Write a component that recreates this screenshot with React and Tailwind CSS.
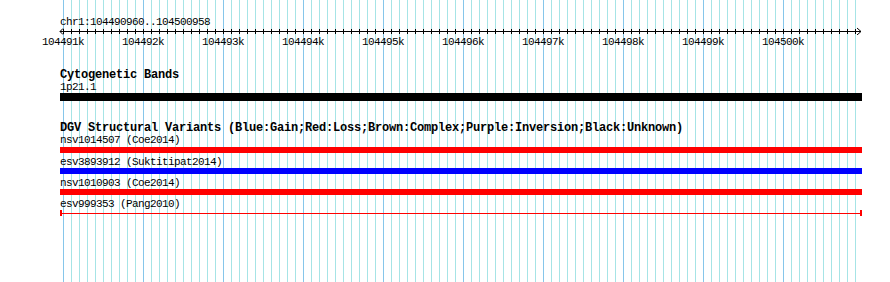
const ticks = Array.from({length: 100}, (_, i) => 63 + i * 8);
const labels = ["104491k", "104492k", "104493k", "104494k", "104495k", "104496k", "104497k", "104498k", "104499k", "104500k"];

const variants = [
    {name: "nsv1014507 (Coe2014)", color: "bg-[#ff0000]"},
    {name: "esv3893912 (Suktitipat2014)", color: "bg-[#0000ff]"},
    {name: "nsv1010903 (Coe2014)", color: "bg-[#ff0000]"},
];

function Grid() {
    return (
        <svg className="absolute inset-0" width="890" height="282" shapeRendering="crispEdges">
            {ticks.map((x, i) => (
                <line key={x} x1={x + 0.5} x2={x + 0.5} y1="0" y2="282"
                      stroke={i % 10 === 0 ? "#86c6ea" : "#a6e4e6"} strokeWidth="1"/>
            ))}
        </svg>
    );
}

function Ruler() {
    return (
        <svg className="mt-[-1px]" width="890" height="8" shapeRendering="crispEdges">
            <line x1="60" x2="861" y1="4.5" y2="4.5" stroke="#000"/>
            {ticks.map(x => (
                <line key={x} x1={x + 0.5} x2={x + 0.5} y1="2" y2="7" stroke="#000"/>
            ))}
            <polyline points="857,1 861,4.5 857,8" fill="none" stroke="#000" shapeRendering="auto"/>
            <polyline points="63,1.5 60,4.5 63,7.5" fill="none" stroke="#000" shapeRendering="auto"/>
        </svg>
    );
}

export default function App() {
    return (
        <div className="relative w-[890px] h-[282px] overflow-hidden bg-white text-black font-['Liberation_Mono',monospace]">
            <Grid/>
            <div className="relative flex flex-col pt-[16px]">
                <div className="pl-[60px] text-[11px] leading-[12px] tracking-[-0.6px] whitespace-pre">
                    chr1:104490960..104500958
                </div>
                <Ruler/>
                <div className="flex pl-[23px] mt-[1px] text-[11px] leading-[12px] tracking-[-0.6px]">
                    {labels.map(label => (
                        <div key={label} className="w-[80px] shrink-0 text-center">{label}</div>
                    ))}
                </div>

                <div className="pl-[60px] mt-[21px] text-[12px] leading-[12px] tracking-[-0.2px] font-bold whitespace-pre">
                    Cytogenetic Bands
                </div>
                <div className="pl-[60px] text-[11px] leading-[12px] tracking-[-0.6px]">1p21.1</div>
                <div className="ml-[60px] w-[802px] h-[8px] bg-black"/>

                <div className="pl-[60px] mt-[21px] text-[12px] leading-[12px] tracking-[-0.2px] font-bold whitespace-pre">
                    DGV Structural Variants (Blue:Gain;Red:Loss;Brown:Complex;Purple:Inversion;Black:Unknown)
                </div>
                {variants.map((v, i) => (
                    <div key={v.name} className={i === 0 ? "" : "mt-[3px]"}>
                        <div className="pl-[60px] text-[11px] leading-[12px] tracking-[-0.6px] whitespace-pre">{v.name}</div>
                        <div className={`ml-[60px] w-[802px] h-[6px] ${i === 0 ? "mt-[1px]" : ""} ${v.color}`}/>
                    </div>
                ))}
                <div className="mt-[3px] pl-[60px] text-[11px] leading-[12px] tracking-[-0.6px] whitespace-pre">
                    esv999353 (Pang2010)
                </div>
                <div className="ml-[60px] w-[802px] h-[6px] flex items-center">
                    <div className="w-[2px] h-full bg-[#ff0000]"/>
                    <div className="flex-1 h-[1px] bg-[#ff0000]"/>
                    <div className="w-[2px] h-full bg-[#ff0000]"/>
                </div>
            </div>
        </div>
    );
}
